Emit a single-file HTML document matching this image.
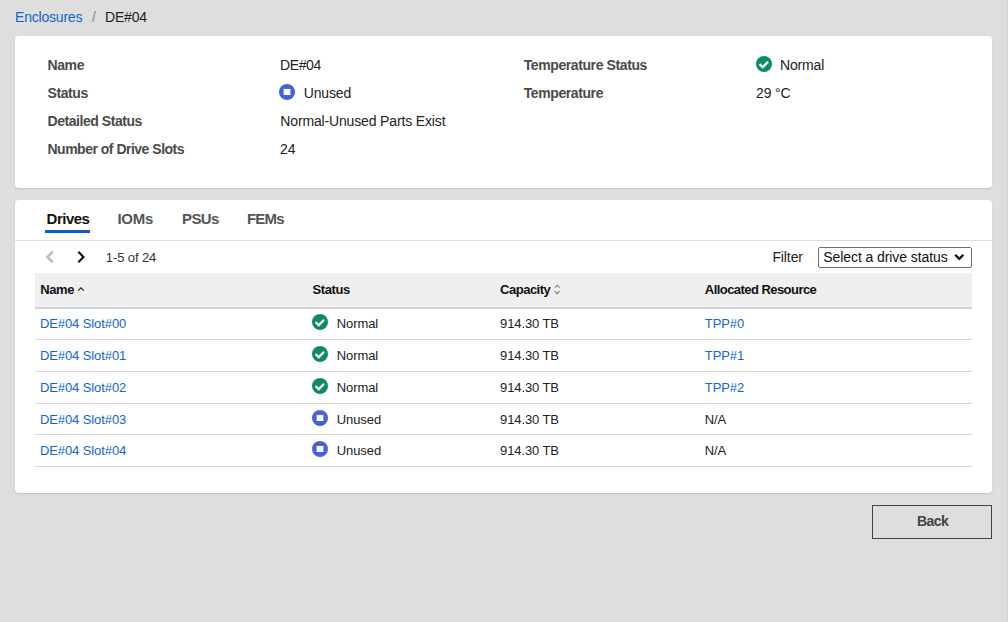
<!DOCTYPE html>
<html><head><meta charset="utf-8"><style>
html,body{margin:0;padding:0}
body{width:1008px;height:622px;background:#dedede;position:relative;overflow:hidden;font-family:"Liberation Sans",sans-serif}
.t{position:absolute;white-space:nowrap}
.ic{position:absolute}
.card{position:absolute;background:#fff;border-radius:4px;box-shadow:0 1px 2px rgba(0,0,0,0.12)}
.ln{position:absolute;height:1px;background:#d6d6d6}
</style></head><body>
<div class="t" style="left:15px;top:7.85px;font-size:14px;line-height:18px;font-weight:400;color:#1264d2;letter-spacing:-0.2px;">Enclosures</div>
<div class="t" style="left:92px;top:7.85px;font-size:14px;line-height:18px;font-weight:400;color:#888;">/</div>
<div class="t" style="left:105px;top:7.85px;font-size:14px;line-height:18px;font-weight:400;color:#222;letter-spacing:-0.2px;">DE#04</div>
<div class="card" style="left:15px;top:36px;width:977px;height:152px"></div>
<div class="t" style="left:47.5px;top:56.15px;font-size:14px;line-height:18px;font-weight:700;color:#4a4a4a;letter-spacing:-0.4px;">Name</div>
<div class="t" style="left:47.5px;top:84.15px;font-size:14px;line-height:18px;font-weight:700;color:#4a4a4a;letter-spacing:-0.4px;">Status</div>
<div class="t" style="left:47.5px;top:112.15px;font-size:14px;line-height:18px;font-weight:700;color:#4a4a4a;letter-spacing:-0.45px;">Detailed Status</div>
<div class="t" style="left:47.5px;top:140.15px;font-size:14px;line-height:18px;font-weight:700;color:#4a4a4a;letter-spacing:-0.5px;">Number of Drive Slots</div>
<div class="t" style="left:280px;top:56.15px;font-size:14px;line-height:18px;font-weight:400;color:#222;letter-spacing:-0.4px;">DE#04</div>
<svg class="ic" style="left:279px;top:84px" width="16" height="16" viewBox="0 0 16 16"><circle cx="8" cy="8" r="8" fill="#4463d9"/><rect x="4.6" y="4.9" width="6.8" height="6.1" fill="#fff"/></svg>
<div class="t" style="left:303.7px;top:84.15px;font-size:14px;line-height:18px;font-weight:400;color:#222;letter-spacing:-0.15px;">Unused</div>
<div class="t" style="left:280.3px;top:112.15px;font-size:14px;line-height:18px;font-weight:400;color:#222;letter-spacing:-0.15px;">Normal-Unused Parts Exist</div>
<div class="t" style="left:280px;top:140.15px;font-size:14px;line-height:18px;font-weight:400;color:#222;">24</div>
<div class="t" style="left:523.7px;top:56.15px;font-size:14px;line-height:18px;font-weight:700;color:#4a4a4a;letter-spacing:-0.4px;">Temperature Status</div>
<div class="t" style="left:523.7px;top:84.15px;font-size:14px;line-height:18px;font-weight:700;color:#4a4a4a;letter-spacing:-0.4px;">Temperature</div>
<svg class="ic" style="left:756px;top:56px" width="16" height="16" viewBox="0 0 16 16"><circle cx="8" cy="8" r="8" fill="#0f8c66"/><path d="M3.5 8.1 L6.8 11.1 L12.1 5.7" fill="none" stroke="#fff" stroke-width="2.2"/></svg>
<div class="t" style="left:780px;top:56.15px;font-size:14px;line-height:18px;font-weight:400;color:#222;letter-spacing:-0.15px;">Normal</div>
<div class="t" style="left:756px;top:84.15px;font-size:14px;line-height:18px;font-weight:400;color:#222;letter-spacing:-0.15px;">29 °C</div>
<div class="card" style="left:15px;top:200px;width:977px;height:293px"></div>
<div class="t" style="left:46.6px;top:209.30px;font-size:15px;line-height:19px;font-weight:700;color:#111;letter-spacing:-0.5px;">Drives</div>
<div class="t" style="left:117.5px;top:209.30px;font-size:15px;line-height:19px;font-weight:700;color:#555;letter-spacing:-0.3px;">IOMs</div>
<div class="t" style="left:182px;top:209.30px;font-size:15px;line-height:19px;font-weight:700;color:#555;letter-spacing:-0.6px;">PSUs</div>
<div class="t" style="left:247px;top:209.30px;font-size:15px;line-height:19px;font-weight:700;color:#555;letter-spacing:-0.8px;">FEMs</div>
<div style="position:absolute;left:45px;top:230px;width:45px;height:3px;background:#0b5ccb"></div>
<div class="ln" style="left:15px;top:240px;width:977px;background:#dcdcdc"></div>
<svg class="ic" style="left:44px;top:249px" width="12" height="16" viewBox="0 0 12 16"><path d="M8.8 2.6 L3.4 8 L8.8 13.4" fill="none" stroke="#b3bcc5" stroke-width="2.5"/></svg>
<svg class="ic" style="left:75px;top:249px" width="12" height="16" viewBox="0 0 12 16"><path d="M3.3 2.8 L8.5 8 L3.3 13.2" fill="none" stroke="#111" stroke-width="2.1"/></svg>
<div class="t" style="left:105.8px;top:249.90px;font-size:13px;line-height:16px;font-weight:400;color:#333;letter-spacing:-0.1px;">1-5 of 24</div>
<div class="t" style="left:772.4px;top:247.95px;font-size:14px;line-height:18px;font-weight:400;color:#222;letter-spacing:-0.1px;">Filter</div>
<div style="position:absolute;left:818px;top:247px;width:152px;height:19px;border:1px solid #6e6e6e;border-radius:2px;background:#fff"></div>
<div class="t" style="left:823.3px;top:248.15px;font-size:14px;line-height:18px;font-weight:400;color:#111;letter-spacing:-0.08px;">Select a drive status</div>
<svg class="ic" style="left:953px;top:252px" width="13" height="10" viewBox="0 0 13 10"><path d="M2.2 2.8 L6.3 6.8 L10.4 2.8" fill="none" stroke="#111" stroke-width="2.3"/></svg>
<div style="position:absolute;left:35px;top:273px;width:937px;height:34px;background:#efefef"></div>
<div style="position:absolute;left:35px;top:307px;width:937px;height:2px;background:#cfd2d6"></div>
<div class="t" style="left:40.2px;top:281.50px;font-size:13px;line-height:16px;font-weight:700;color:#111;letter-spacing:-0.35px;">Name</div>
<svg class="ic" style="left:76px;top:285px" width="10" height="8" viewBox="0 0 10 8"><path d="M2.2 5.6 L5 2.8 L7.8 5.6" fill="none" stroke="#222" stroke-width="1.15"/></svg>
<div class="t" style="left:312.5px;top:281.50px;font-size:13px;line-height:16px;font-weight:700;color:#111;letter-spacing:-0.4px;">Status</div>
<div class="t" style="left:500.1px;top:281.50px;font-size:13px;line-height:16px;font-weight:700;color:#111;letter-spacing:-0.5px;">Capacity</div>
<svg class="ic" style="left:553px;top:283px" width="8" height="13" viewBox="0 0 8 13"><path d="M1.8 4.6 L4.2 2.2 L6.6 4.6 M1.8 8.2 L4.2 10.6 L6.6 8.2" fill="none" stroke="#777" stroke-width="1.1"/></svg>
<div class="t" style="left:704.8px;top:281.50px;font-size:13px;line-height:16px;font-weight:700;color:#111;letter-spacing:-0.55px;">Allocated Resource</div>
<div class="t" style="left:40px;top:315.90px;font-size:13px;line-height:16px;font-weight:400;color:#1264d2;letter-spacing:-0.1px;">DE#04 Slot#00</div>
<svg class="ic" style="left:312px;top:314.0px" width="16" height="16" viewBox="0 0 16 16"><circle cx="8" cy="8" r="8" fill="#0f8c66"/><path d="M3.5 8.1 L6.8 11.1 L12.1 5.7" fill="none" stroke="#fff" stroke-width="2.2"/></svg>
<div class="t" style="left:336.8px;top:315.90px;font-size:13px;line-height:16px;font-weight:400;color:#222;letter-spacing:-0.1px;">Normal</div>
<div class="t" style="left:500px;top:315.90px;font-size:13px;line-height:16px;font-weight:400;color:#222;letter-spacing:-0.1px;">914.30 TB</div>
<div class="t" style="left:704.8px;top:315.90px;font-size:13px;line-height:16px;font-weight:400;color:#1264d2;letter-spacing:-0.1px;">TPP#0</div>
<div class="ln" style="left:35px;top:339px;width:937px"></div>
<div class="t" style="left:40px;top:347.90px;font-size:13px;line-height:16px;font-weight:400;color:#1264d2;letter-spacing:-0.1px;">DE#04 Slot#01</div>
<svg class="ic" style="left:312px;top:346.0px" width="16" height="16" viewBox="0 0 16 16"><circle cx="8" cy="8" r="8" fill="#0f8c66"/><path d="M3.5 8.1 L6.8 11.1 L12.1 5.7" fill="none" stroke="#fff" stroke-width="2.2"/></svg>
<div class="t" style="left:336.8px;top:347.90px;font-size:13px;line-height:16px;font-weight:400;color:#222;letter-spacing:-0.1px;">Normal</div>
<div class="t" style="left:500px;top:347.90px;font-size:13px;line-height:16px;font-weight:400;color:#222;letter-spacing:-0.1px;">914.30 TB</div>
<div class="t" style="left:704.8px;top:347.90px;font-size:13px;line-height:16px;font-weight:400;color:#1264d2;letter-spacing:-0.1px;">TPP#1</div>
<div class="ln" style="left:35px;top:371px;width:937px"></div>
<div class="t" style="left:40px;top:379.90px;font-size:13px;line-height:16px;font-weight:400;color:#1264d2;letter-spacing:-0.1px;">DE#04 Slot#02</div>
<svg class="ic" style="left:312px;top:378.0px" width="16" height="16" viewBox="0 0 16 16"><circle cx="8" cy="8" r="8" fill="#0f8c66"/><path d="M3.5 8.1 L6.8 11.1 L12.1 5.7" fill="none" stroke="#fff" stroke-width="2.2"/></svg>
<div class="t" style="left:336.8px;top:379.90px;font-size:13px;line-height:16px;font-weight:400;color:#222;letter-spacing:-0.1px;">Normal</div>
<div class="t" style="left:500px;top:379.90px;font-size:13px;line-height:16px;font-weight:400;color:#222;letter-spacing:-0.1px;">914.30 TB</div>
<div class="t" style="left:704.8px;top:379.90px;font-size:13px;line-height:16px;font-weight:400;color:#1264d2;letter-spacing:-0.1px;">TPP#2</div>
<div class="ln" style="left:35px;top:403px;width:937px"></div>
<div class="t" style="left:40px;top:411.90px;font-size:13px;line-height:16px;font-weight:400;color:#1264d2;letter-spacing:-0.1px;">DE#04 Slot#03</div>
<svg class="ic" style="left:312px;top:410.0px" width="16" height="16" viewBox="0 0 16 16"><circle cx="8" cy="8" r="8" fill="#4463d9"/><rect x="4.6" y="4.9" width="6.8" height="6.1" fill="#fff"/></svg>
<div class="t" style="left:336.8px;top:411.90px;font-size:13px;line-height:16px;font-weight:400;color:#222;letter-spacing:-0.1px;">Unused</div>
<div class="t" style="left:500px;top:411.90px;font-size:13px;line-height:16px;font-weight:400;color:#222;letter-spacing:-0.1px;">914.30 TB</div>
<div class="t" style="left:704.8px;top:411.90px;font-size:13px;line-height:16px;font-weight:400;color:#222;letter-spacing:-0.1px;">N/A</div>
<div class="ln" style="left:35px;top:434px;width:937px"></div>
<div class="t" style="left:40px;top:442.90px;font-size:13px;line-height:16px;font-weight:400;color:#1264d2;letter-spacing:-0.1px;">DE#04 Slot#04</div>
<svg class="ic" style="left:312px;top:441.0px" width="16" height="16" viewBox="0 0 16 16"><circle cx="8" cy="8" r="8" fill="#4463d9"/><rect x="4.6" y="4.9" width="6.8" height="6.1" fill="#fff"/></svg>
<div class="t" style="left:336.8px;top:442.90px;font-size:13px;line-height:16px;font-weight:400;color:#222;letter-spacing:-0.1px;">Unused</div>
<div class="t" style="left:500px;top:442.90px;font-size:13px;line-height:16px;font-weight:400;color:#222;letter-spacing:-0.1px;">914.30 TB</div>
<div class="t" style="left:704.8px;top:442.90px;font-size:13px;line-height:16px;font-weight:400;color:#222;letter-spacing:-0.1px;">N/A</div>
<div class="ln" style="left:35px;top:466px;width:937px"></div>
<div style="position:absolute;left:872px;top:505px;width:118px;height:32px;border:1px solid #444;background:#dedede"></div>
<div class="t" style="left:917px;top:511.95px;font-size:14px;line-height:18px;font-weight:700;color:#444;letter-spacing:-0.6px;">Back</div>
<div style="position:absolute;left:1007px;top:0;width:1px;height:622px;background:#d6d6d6"></div>
</body></html>
